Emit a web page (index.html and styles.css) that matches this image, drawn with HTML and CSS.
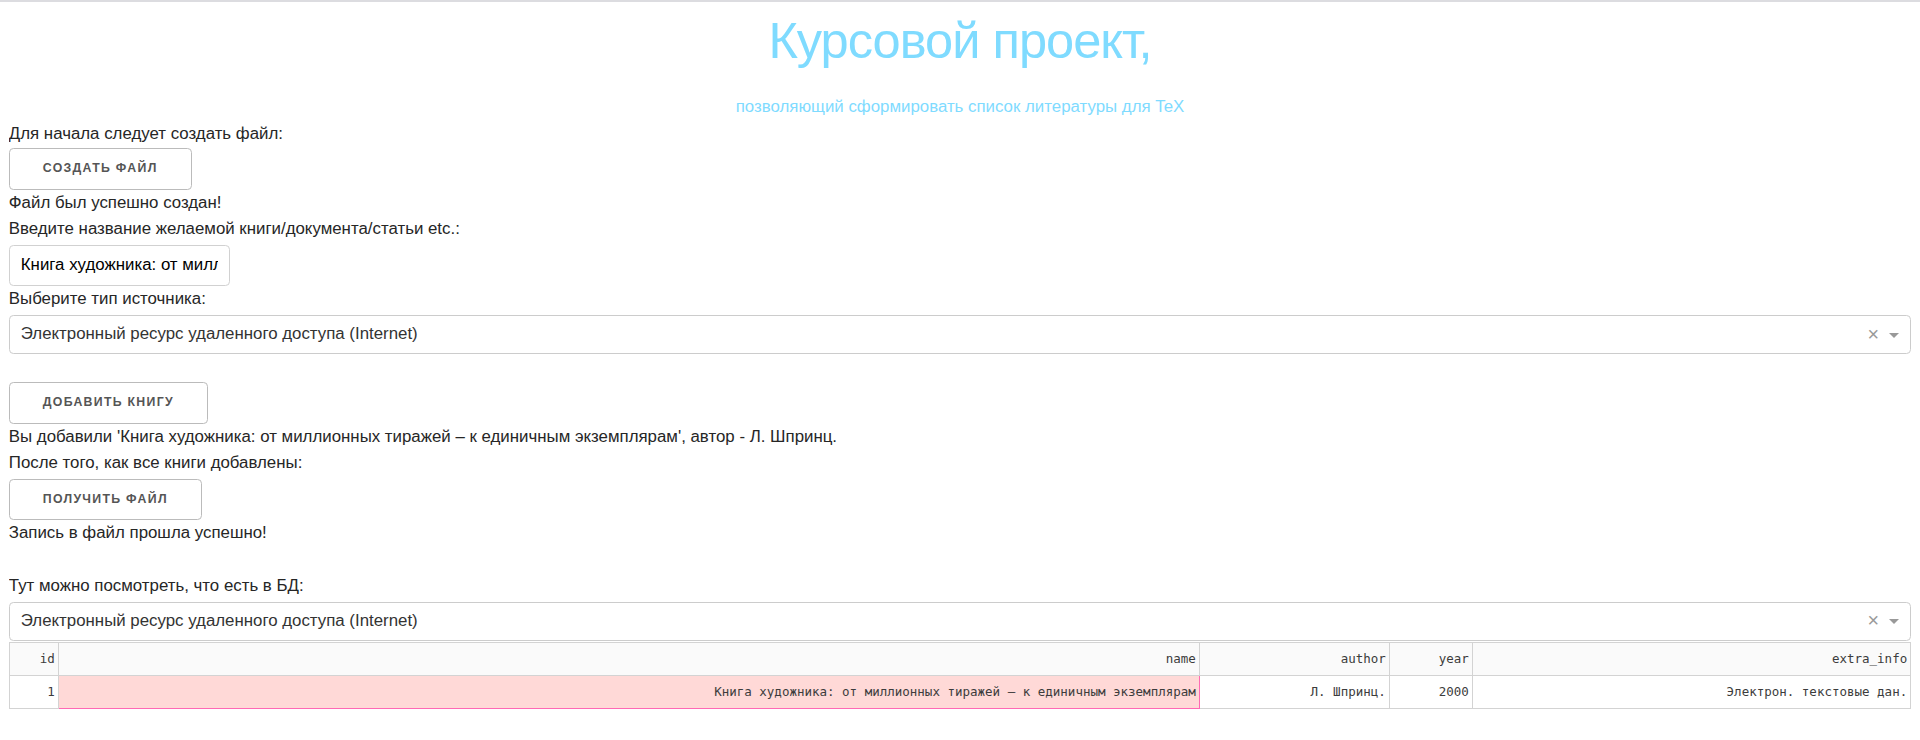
FILE: index.html
```html
<!DOCTYPE html>
<html lang="ru">
<head>
<meta charset="utf-8">
<title>Курсовой проект</title>
<link rel="stylesheet" href="styles.css">
</head>
<body>
<div class="app">
  <h1 class="title">Курсовой проект,</h1>
  <div class="subtitle">позволяющий сформировать список литературы для TeX</div>

  <div class="line">Для начала следует создать файл:</div>
  <button class="btn btn-first">Создать файл</button>
  <div class="line">Файл был успешно создан!</div>
  <div class="line">Введите название желаемой книги/документа/статьи etc.:</div>
  <input class="text-input" type="text" value="Книга художника: от миллионных тиражей – к единичным экземплярам">
  <div class="line">Выберите тип источника:</div>
  <div class="select">
    <span class="select-value">Электронный ресурс удаленного доступа (Internet)</span>
    <span class="select-clear">×</span>
    <span class="select-arrow-zone"><span class="select-arrow"></span></span>
  </div>

  <button class="btn btn-spaced">Добавить книгу</button>
  <div class="line">Вы добавили 'Книга художника: от миллионных тиражей – к единичным экземплярам', автор - Л. Шпринц.</div>
  <div class="line">После того, как все книги добавлены:</div>
  <button class="btn">Получить файл</button>
  <div class="line">Запись в файл прошла успешно!</div>
  <div class="line empty"></div>
  <div class="line">Тут можно посмотреть, что есть в БД:</div>
  <div class="select">
    <span class="select-value">Электронный ресурс удаленного доступа (Internet)</span>
    <span class="select-clear">×</span>
    <span class="select-arrow-zone"><span class="select-arrow"></span></span>
  </div>

  <table class="data-table">
    <colgroup>
      <col class="c-id"><col class="c-name"><col class="c-author"><col class="c-year"><col class="c-extra">
    </colgroup>
    <thead>
      <tr><th>id</th><th>name</th><th>author</th><th>year</th><th>extra_info</th></tr>
    </thead>
    <tbody>
      <tr><td>1</td><td class="cell-focused">Книга художника: от миллионных тиражей – к единичным экземплярам</td><td>Л. Шпринц.</td><td>2000</td><td>Электрон. текстовые дан.</td></tr>
    </tbody>
  </table>
</div>
</body>
</html>
```

FILE: styles.css
```css
html {
  border-top: 2px solid #dcdce0;
  background: #fff;
}
body {
  margin: 8.8px;
  font-family: "Liberation Sans", Arial, sans-serif;
  font-size: 16.85px;
  line-height: 26.4px;
  color: #262626;
}
.app {
  display: flex;
  flex-direction: column;
  align-items: flex-start;
}
.title {
  align-self: stretch;
  margin: 0 0 24px 0;
  text-align: center;
  font-size: 50.6px;
  line-height: 59.4px;
  letter-spacing: -1px;
  font-weight: 400;
  color: #7fdbff;
}
.subtitle {
  align-self: stretch;
  text-align: center;
  color: #7fdbff;
}
.line {
  height: 26.4px;
  white-space: nowrap;
}
.btn {
  height: 41.8px;
  margin-top: 2px;
  padding: 0 33px;
  box-sizing: border-box;
  border: 1px solid #bbb;
  border-radius: 4.4px;
  background: transparent;
  color: #555;
  font-family: "Liberation Sans", Arial, sans-serif;
  font-size: 12.3px;
  font-weight: 700;
  letter-spacing: 1.3px;
  text-transform: uppercase;
  line-height: 39.8px;
  white-space: nowrap;
}
.btn-first { margin-top: 1px; }
.btn-spaced { margin-top: 27.7px; }
.text-input {
  width: 221px;
  height: 41.8px;
  margin-top: 2px;
  padding: 6.6px 11px;
  box-sizing: border-box;
  border: 1px solid #d1d1d1;
  border-radius: 4.4px;
  font-family: "Liberation Sans", Arial, sans-serif;
  font-size: 16.85px;
  color: #000;
  background: #fff;
  outline: none;
}
.select {
  align-self: stretch;
  display: flex;
  align-items: center;
  height: 39.6px;
  margin-top: 2px;
  box-sizing: border-box;
  border: 1px solid #ccc;
  border-radius: 4.4px;
  color: #333;
  background: #fff;
}
.select-value {
  flex: 1;
  padding: 0 11px;
  white-space: nowrap;
}
.select-clear {
  width: 18.7px;
  text-align: center;
  color: #999;
  font-size: 19.8px;
  line-height: 1;
}
.select-arrow-zone {
  width: 22px;
  padding-right: 5.5px;
  display: flex;
  justify-content: center;
  align-items: center;
}
.select-arrow {
  width: 0;
  height: 0;
  border-style: solid;
  border-width: 5.5px 5.5px 2.75px;
  border-color: #999 transparent transparent;
  margin-top: 3px;
}
.data-table {
  align-self: stretch;
  margin-top: 1px;
  border-collapse: collapse;
  table-layout: fixed;
  font-family: "DejaVu Sans Mono", "Liberation Mono", monospace;
  font-size: 12.5px;
  color: #3c3c3c;
}
.c-id { width: 49px; }
.c-name { width: 1141px; }
.c-author { width: 190px; }
.c-year { width: 83px; }
.c-extra { width: auto; }
.data-table th,
.data-table td {
  height: 33px;
  padding: 0 3px 0 3px;
  border: 1px solid #d3d3d3;
  text-align: right;
  font-weight: 400;
  white-space: nowrap;
  box-sizing: border-box;
}
.data-table th {
  background: #fafafa;
}
.data-table td.cell-focused {
  background: rgb(255, 217, 215);
  border: 1px solid #ff69b4;
}
```
